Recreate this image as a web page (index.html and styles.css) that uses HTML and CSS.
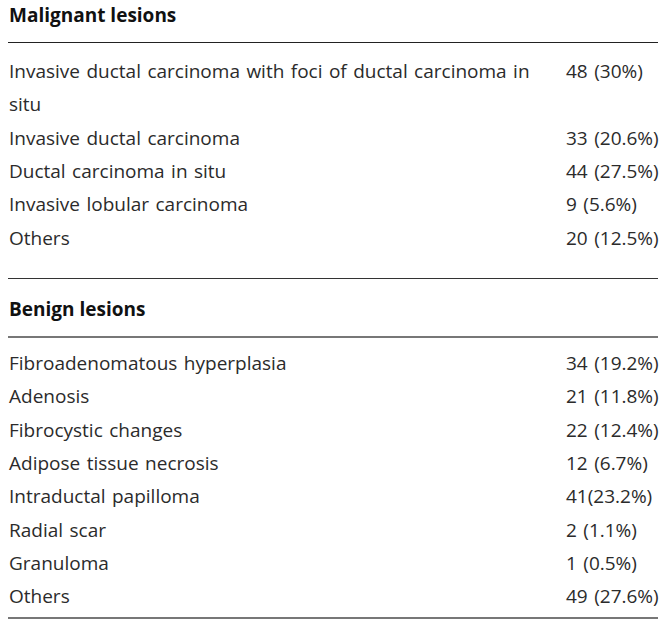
FILE: index.html
```html
<!DOCTYPE html>
<html>
<head>
<meta charset="utf-8">
<link rel="stylesheet" href="styles.css">
</head>
<body>
<div class="table">
  <div class="head head-first">Malignant lesions</div>
  <div class="rows rows-mal">
    <div class="label">Invasive ductal carcinoma with foci of ductal carcinoma in situ</div><div class="value">48 (30%)</div>
    <div class="label">Invasive ductal carcinoma</div><div class="value">33 (20.6%)</div>
    <div class="label">Ductal carcinoma in situ</div><div class="value">44 (27.5%)</div>
    <div class="label">Invasive lobular carcinoma</div><div class="value">9 (5.6%)</div>
    <div class="label">Others</div><div class="value">20 (12.5%)</div>
  </div>
  <div class="head head-second">Benign lesions</div>
  <div class="rows rows-ben">
    <div class="label">Fibroadenomatous hyperplasia</div><div class="value">34 (19.2%)</div>
    <div class="label">Adenosis</div><div class="value">21 (11.8%)</div>
    <div class="label">Fibrocystic changes</div><div class="value">22 (12.4%)</div>
    <div class="label">Adipose tissue necrosis</div><div class="value">12 (6.7%)</div>
    <div class="label">Intraductal papilloma</div><div class="value">41(23.2%)</div>
    <div class="label">Radial scar</div><div class="value">2 (1.1%)</div>
    <div class="label">Granuloma</div><div class="value">1 (0.5%)</div>
    <div class="label">Others</div><div class="value">49 (27.6%)</div>
  </div>
</div>
</body>
</html>
```
FILE: styles.css
```css
html, body {
  margin: 0;
  padding: 0;
  background: #ffffff;
}
body {
  font-family: "Open Sans", "Noto Sans", sans-serif;
  font-size: 19px;
  word-spacing: 1.5px;
  color: #2b2b2b;
}
.table {
  width: 650px;
  margin-left: 8px;
}
.head {
  font-size: 19px;
  font-weight: 700;
  word-spacing: 0;
  color: #111111;
  line-height: 24px;
  padding-left: 1px;
}
.head-first {
  padding-top: 3px;
  padding-bottom: 15px;
  border-bottom: 1px solid #222222;
}
.head-second {
  padding-top: 18px;
  padding-bottom: 15px;
  border-bottom: 2px solid #777777;
}
.rows {
  display: grid;
  grid-template-columns: 557px 1fr;
  line-height: 33.35px;
}
.rows-mal {
  padding-top: 12px;
  padding-bottom: 23px;
  border-bottom: 1px solid #333333;
}
.rows-ben {
  padding-top: 9px;
  padding-bottom: 3px;
  border-bottom: 2px solid #777777;
}
.label {
  padding-left: 1px;
  padding-right: 18px;
}
.value {
  padding-left: 1px;
  white-space: nowrap;
}
```
